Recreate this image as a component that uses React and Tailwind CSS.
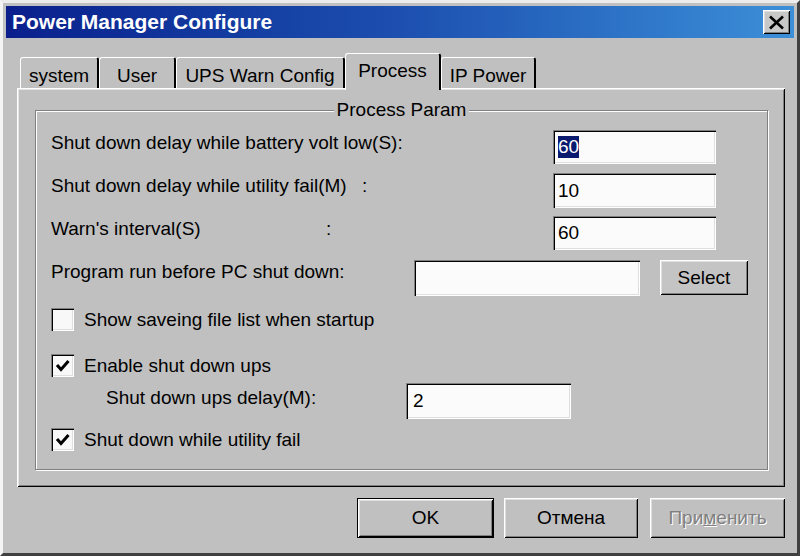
import React from "react";

const raised =
  "shadow-[inset_1px_1px_0_#ffffff,inset_-1px_-1px_0_#000000,inset_2px_2px_0_#dfdfdf,inset_-2px_-2px_0_#808080]";
const sunken =
  "shadow-[inset_1px_1px_0_#808080,inset_2px_2px_0_#000000,inset_-1px_-1px_0_#ffffff,inset_-2px_-2px_0_#dfdfdf]";

function Tab({ w, children, selected }) {
  if (selected) {
    return (
      <div
        className={`relative z-10 ${w} h-[37px] -mb-[2px] bg-[#c0c0c0] border-t border-l border-white border-r-2 border-r-black rounded-t-[3px] flex justify-center pt-[6px]`}
      >
        <span>{children}</span>
      </div>
    );
  }
  return (
    <div
      className={`${w} h-[31px] bg-[#c0c0c0] border-t border-l border-white border-r-2 border-r-black rounded-t-[3px] flex justify-center pt-[7px]`}
    >
      <span>{children}</span>
    </div>
  );
}

function Input({ w, h, children, pl = "pl-[5px]" }) {
  return (
    <div className={`${w} ${h} bg-[#fbfbfb] ${sunken} flex items-center ${pl}`}>
      {children}
    </div>
  );
}

function Check({ checked }) {
  return (
    <div className={`w-[23px] h-[23px] shrink-0 bg-[#f8f8f8] ${sunken} flex items-center justify-center`}>
      {checked && (
        <svg width="15" height="13" viewBox="0 0 15 13">
          <polyline points="2,6 6,10.5 13.5,2" fill="none" stroke="#000" strokeWidth="3" />
        </svg>
      )}
    </div>
  );
}

export default function App() {
  return (
    <div
      className="w-[800px] h-[556px] bg-[#c0c0c0] text-black text-[19px] leading-[22px] border-t-[3px] border-l-[3px] border-t-[#ececec] border-l-[#f4f4f4] border-r-[3px] border-b-[3px] border-r-[#404040] border-b-[#404040] p-[3px] flex flex-col overflow-hidden"
      style={{ fontFamily: '"Liberation Sans", Arial, sans-serif' }}
    >
      {/* Title bar */}
      <div className="h-[32px] shrink-0 bg-gradient-to-r from-[#0b1f8c] via-[#1d4fb0] to-[#3d8fd8] flex items-center pl-[6px] pr-[4px]">
        <span className="text-white font-bold text-[21px] leading-[24px] flex-1">
          Power Manager Configure
        </span>
        <div className={`w-[27px] h-[24px] bg-[#c8c8c8] ${raised} flex items-center justify-center`}>
          <svg width="17" height="15" viewBox="0 0 17 15">
            <line x1="2" y1="1.5" x2="15" y2="13.5" stroke="#000" strokeWidth="2.6" />
            <line x1="15" y1="1.5" x2="2" y2="13.5" stroke="#000" strokeWidth="2.6" />
          </svg>
        </div>
      </div>

      {/* Tabs + panel */}
      <div className="pl-[11px] mt-[15px] flex flex-col">
        <div className="h-[35px] flex items-end ml-[3px]">
          <Tab w="w-[79px]">system</Tab>
          <Tab w="w-[77px]">User</Tab>
          <Tab w="w-[169px]">UPS Warn Config</Tab>
          <Tab w="w-[96px]" selected>
            Process
          </Tab>
          <Tab w="w-[95px]">IP Power</Tab>
        </div>

        <div
          className={`w-[768px] h-[399px] bg-[#c0c0c0] shadow-[inset_1px_1px_0_#ffffff,inset_-1px_-1px_0_#000000,inset_2px_2px_0_#e4e4e4,inset_-2px_-2px_0_#808080] pt-[22px] pl-[18px]`}
        >
          {/* Group box */}
          <div className="relative w-[733px] h-[360px] border border-[#808080] shadow-[inset_1px_1px_0_#ffffff,1px_1px_0_#ffffff] pl-[15px] pt-[19px] flex flex-col">
            <span className="absolute left-1/2 -translate-x-1/2 -top-[12px] px-[3px] bg-[#c0c0c0] whitespace-nowrap">
              Process Param
            </span>

            {/* Row 1 */}
            <div className="h-[34px] flex items-start">
              <div className="w-[502px] pt-[2px] whitespace-nowrap">
                Shut down delay while battery volt low(S):
              </div>
              <Input w="w-[163px]" h="h-[34px]">
                <span className="bg-[#0a1a6e] text-white">60</span>
              </Input>
            </div>

            {/* Row 2 */}
            <div className="h-[35px] mt-[9px] flex items-start">
              <div className="w-[502px] pt-[2px] flex whitespace-nowrap">
                <span className="w-[311px]">Shut down delay while utility fail(M)</span>
                <span>:</span>
              </div>
              <Input w="w-[163px]" h="h-[35px]">10</Input>
            </div>

            {/* Row 3 */}
            <div className="h-[34px] mt-[8px] flex items-start">
              <div className="w-[502px] pt-[2px] flex whitespace-nowrap">
                <span className="w-[275px]">Warn's interval(S)</span>
                <span>:</span>
              </div>
              <Input w="w-[163px]" h="h-[34px]">60</Input>
            </div>

            {/* Row 4 */}
            <div className="h-[36px] mt-[10px] flex items-start">
              <div className="w-[363px] pt-[1px] whitespace-nowrap">Program run before PC shut down:</div>
              <Input w="w-[226px]" h="h-[36px]"></Input>
              <div
                className={`ml-[20px] w-[88px] h-[35px] bg-[#c4c4c4] ${raised} flex items-center justify-center`}
              >
                Select
              </div>
            </div>

            {/* Row 5 */}
            <div className="mt-[12px] flex items-start">
              <Check />
              <span className="ml-[10px] mt-[1px]">Show saveing file list when startup</span>
            </div>

            {/* Row 6 */}
            <div className="mt-[23px] flex items-start">
              <Check checked />
              <span className="ml-[10px] mt-[1px]">Enable shut down ups</span>
            </div>

            {/* Row 7 */}
            <div className="mt-[6px] h-[36px] flex items-start pl-[55px]">
              <div className="w-[300px] pt-[4px] whitespace-nowrap">Shut down ups delay(M):</div>
              <Input w="w-[165px]" h="h-[36px]" pl="pl-[7px]">2</Input>
            </div>

            {/* Row 8 */}
            <div className="mt-[9px] flex items-start">
              <Check checked />
              <span className="ml-[10px] mt-[1px]">Shut down while utility fail</span>
            </div>
          </div>
        </div>
      </div>

      {/* Buttons */}
      <div className="mt-[11px] flex justify-end pr-[9px]">
        <div className={`w-[137px] h-[40px] border border-black bg-[#c0c0c0] ${raised} flex items-center justify-center`}>
          OK
        </div>
        <div className={`ml-[10px] w-[134px] h-[40px] bg-[#c0c0c0] ${raised} flex items-center justify-center`}>
          Отмена
        </div>
        <div
          className={`ml-[12px] w-[135px] h-[40px] bg-[#c0c0c0] ${raised} flex items-center justify-center text-[#808080] [text-shadow:1px_1px_0_#ffffff]`}
        >
          <span>
            При<u>м</u>енить
          </span>
        </div>
      </div>
    </div>
  );
}
